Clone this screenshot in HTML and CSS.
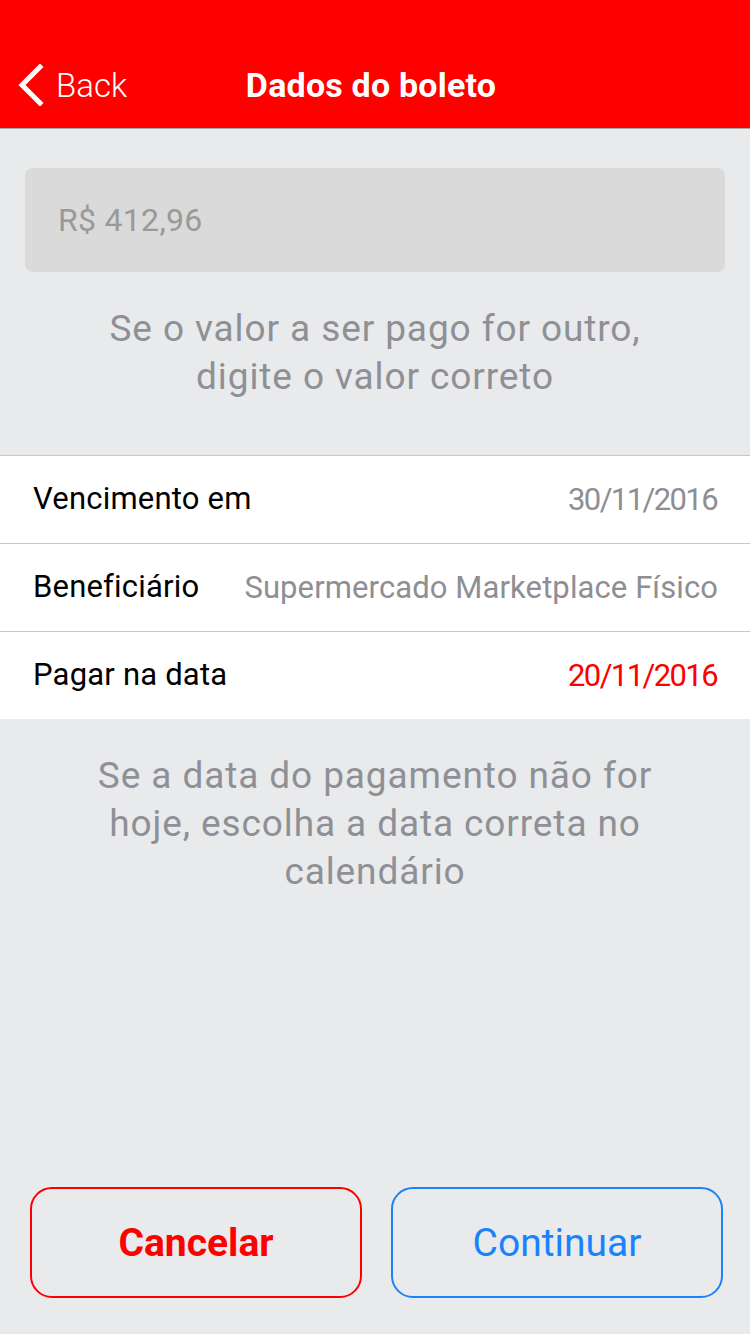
FILE: index.html
```html
<!DOCTYPE html>
<html lang="pt-BR">
<head>
<meta charset="utf-8">
<link rel="stylesheet" href="styles.css">
</head>
<body>
<div class="screen">
  <header class="navbar">
    <div class="nav-inner">
      <div class="back">
        <svg class="chevron" width="28" height="42" viewBox="0 0 28 42"><path d="M24 3 L6 21 L24 39" fill="none" stroke="#fff" stroke-width="5" stroke-linecap="square"/></svg>
        <span>Back</span>
      </div>
      <div class="title">Dados do boleto</div>
    </div>
  </header>
  <section class="amount-section">
    <div class="amount-box">R$ 412,96</div>
    <p class="hint hint-top">Se o valor a ser pago for outro,<br>digite o valor correto</p>
  </section>
  <section class="list">
    <div class="row"><span class="label">Vencimento em</span><span class="value date">30/11/2016</span></div>
    <div class="row"><span class="label">Beneficiário</span><span class="value">Supermercado Marketplace Físico</span></div>
    <div class="row"><span class="label">Pagar na data</span><span class="value date red">20/11/2016</span></div>
  </section>
  <p class="hint hint-bottom">Se a data do pagamento não for<br>hoje, escolha a data correta no<br>calendário</p>
  <div class="spacer"></div>
  <footer class="actions">
    <button class="btn btn-cancel">Cancelar</button>
    <button class="btn btn-continue">Continuar</button>
  </footer>
</div>
</body>
</html>
```
FILE: styles.css
```css
* { box-sizing: border-box; }
html, body { margin: 0; padding: 0; }
body {
  font-family: Roboto, "Liberation Sans", sans-serif;
  background: #e9eaec;
}
.screen {
  width: 750px;
  height: 1334px;
  display: flex;
  flex-direction: column;
  background: #e9eaec;
}
.navbar {
  background: #ff0000;
  height: 129px;
  padding-top: 40px;
  border-bottom: 1px solid #a8a8a8;
  color: #fff;
}
.nav-inner {
  position: relative;
  height: 88px;
  display: flex;
  align-items: center;
  justify-content: center;
}
.back {
  position: absolute;
  left: 16px;
  top: 0;
  height: 88px;
  display: flex;
  align-items: center;
  gap: 12px;
  font-size: 33px;
  font-weight: 300;
  padding-top: 2px;
}
.chevron { display: block; }
.title {
  font-size: 34px;
  font-weight: 700;
  margin-left: -8px;
  padding-top: 2px;
  letter-spacing: 0.2px;
}
.amount-section {
  padding: 39px 25px 0;
  border-bottom: 1px solid #c8c8cc;
}
.amount-box {
  height: 104px;
  background: #dadada;
  border-radius: 8px;
  padding-left: 33px;
  display: flex;
  align-items: center;
  font-size: 32px;
  letter-spacing: 0.3px;
  color: #999999;
}
.hint {
  margin: 0;
  text-align: center;
  color: #8e9096;
  font-size: 37px;
  line-height: 48px;
  letter-spacing: 0.9px;
}
.hint-top {
  padding: 33px 0 54px;
}
.list {
  background: #fff;
}
.row {
  height: 88px;
  display: flex;
  align-items: center;
  justify-content: space-between;
  padding: 0 32px 0 33px;
  border-bottom: 1px solid #c8c8cc;
}
.row:last-child { border-bottom: none; height: 87px; }
.label {
  font-size: 31px;
  color: #000;
  letter-spacing: 0.2px;
  padding-bottom: 2px;
}
.value {
  font-size: 31px;
  color: #8e8e93;
  letter-spacing: 0.1px;
}
.value.date {
  letter-spacing: -1.6px;
  margin-right: 1px;
}
.value.red { color: #ff0000; }
.hint-bottom {
  padding-top: 33px;
}
.spacer { flex: 1; }
.actions {
  display: flex;
  gap: 29px;
  padding: 0 27px 36px 30px;
}
.btn {
  flex: 1;
  height: 111px;
  border-radius: 22px;
  background: transparent;
  font-family: Roboto, "Liberation Sans", sans-serif;
  font-size: 39px;
  border: 2px solid;
}
.btn-cancel {
  color: #ff0000;
  border-color: #ff0000;
  font-weight: 700;
}
.btn-continue {
  color: #1a82fb;
  border-color: #1a82fb;
}
```
